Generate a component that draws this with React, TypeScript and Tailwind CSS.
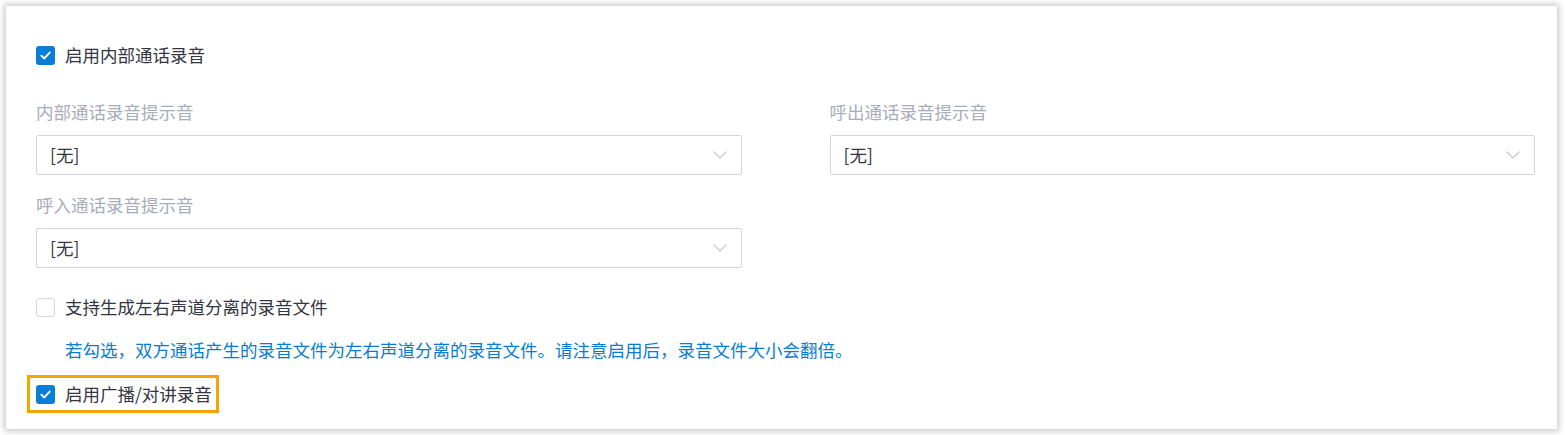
import { useState } from 'react';

const font = { fontFamily: '"Noto Sans CJK SC", "Noto Sans", sans-serif' };

function Check({ checked, onChange }: { checked: boolean; onChange: () => void }) {
  return (
    <button
      type="button"
      onClick={onChange}
      className={
        checked
          ? 'w-[19px] h-[19px] rounded-[3px] bg-[#0a7ed6] flex items-center justify-center shrink-0'
          : 'w-[19px] h-[19px] rounded-[3px] border border-[#d4d6e0] bg-white shrink-0'
      }
    >
      {checked && (
        <svg width="13" height="13" viewBox="0 0 14 14" fill="none">
          <path d="M2.5 7.2 L5.7 10.2 L11.5 3.8" stroke="white" strokeWidth="2" strokeLinecap="round" strokeLinejoin="round" />
        </svg>
      )}
    </button>
  );
}

function CheckRow({ label, checked, onChange }: { label: string; checked: boolean; onChange: () => void }) {
  return (
    <label className="flex items-center h-6 gap-[10px] text-[17.5px] text-[#333642] cursor-pointer">
      <Check checked={checked} onChange={onChange} />
      <span>{label}</span>
    </label>
  );
}

function Select({ label, value }: { label: string; value: string }) {
  return (
    <div className="flex flex-col">
      <div className="h-6 leading-6 text-[17.5px] text-[#a9acbb]">{label}</div>
      <div className="mt-[11px] h-10 border border-[#d3d5e0] rounded-[2px] flex items-center justify-between pl-[13px] pr-[14px] text-[17.5px] text-[#333642]">
        <span>{value}</span>
        <svg width="14" height="8" viewBox="0 0 14 8" fill="none">
          <path d="M0.5 0.5 L7 7 L13.5 0.5" stroke="#c3c4cc" strokeWidth="1.1" />
        </svg>
      </div>
    </div>
  );
}

export default function App() {
  const [internal, setInternal] = useState(true);
  const [split, setSplit] = useState(false);
  const [broadcast, setBroadcast] = useState(true);

  return (
    <div className="w-[1565px] h-[435px] bg-white pt-[6px] pl-[6px] pr-[8px]" style={font}>
      <div className="bg-white h-[423px] shadow-[0_0_6px_2px_rgba(0,0,0,0.22)] pt-[37px] pl-[30px] pr-[22px]">
        <CheckRow label="启用内部通话录音" checked={internal} onChange={() => setInternal(!internal)} />
        <div className="grid grid-cols-2 gap-x-[88px] mt-[33px]">
          <Select label="内部通话录音提示音" value="[无]" />
          <Select label="呼出通话录音提示音" value="[无]" />
        </div>
        <div className="grid grid-cols-2 gap-x-[88px] mt-[18px]">
          <Select label="呼入通话录音提示音" value="[无]" />
        </div>
        <div className="mt-[27px]">
          <CheckRow label="支持生成左右声道分离的录音文件" checked={split} onChange={() => setSplit(!split)} />
        </div>
        <p className="mt-[19px] ml-[29px] h-6 leading-6 text-[17.5px] text-[#0a7cd0]">
          若勾选，双方通话产生的录音文件为左右声道分离的录音文件。请注意启用后，录音文件大小会翻倍。
        </p>
        <div className="mt-[13px] -ml-[9px] inline-flex border-[3px] border-[#f5a500] py-1 pl-[6px] pr-[4px]">
          <CheckRow label="启用广播/对讲录音" checked={broadcast} onChange={() => setBroadcast(!broadcast)} />
        </div>
      </div>
    </div>
  );
}
